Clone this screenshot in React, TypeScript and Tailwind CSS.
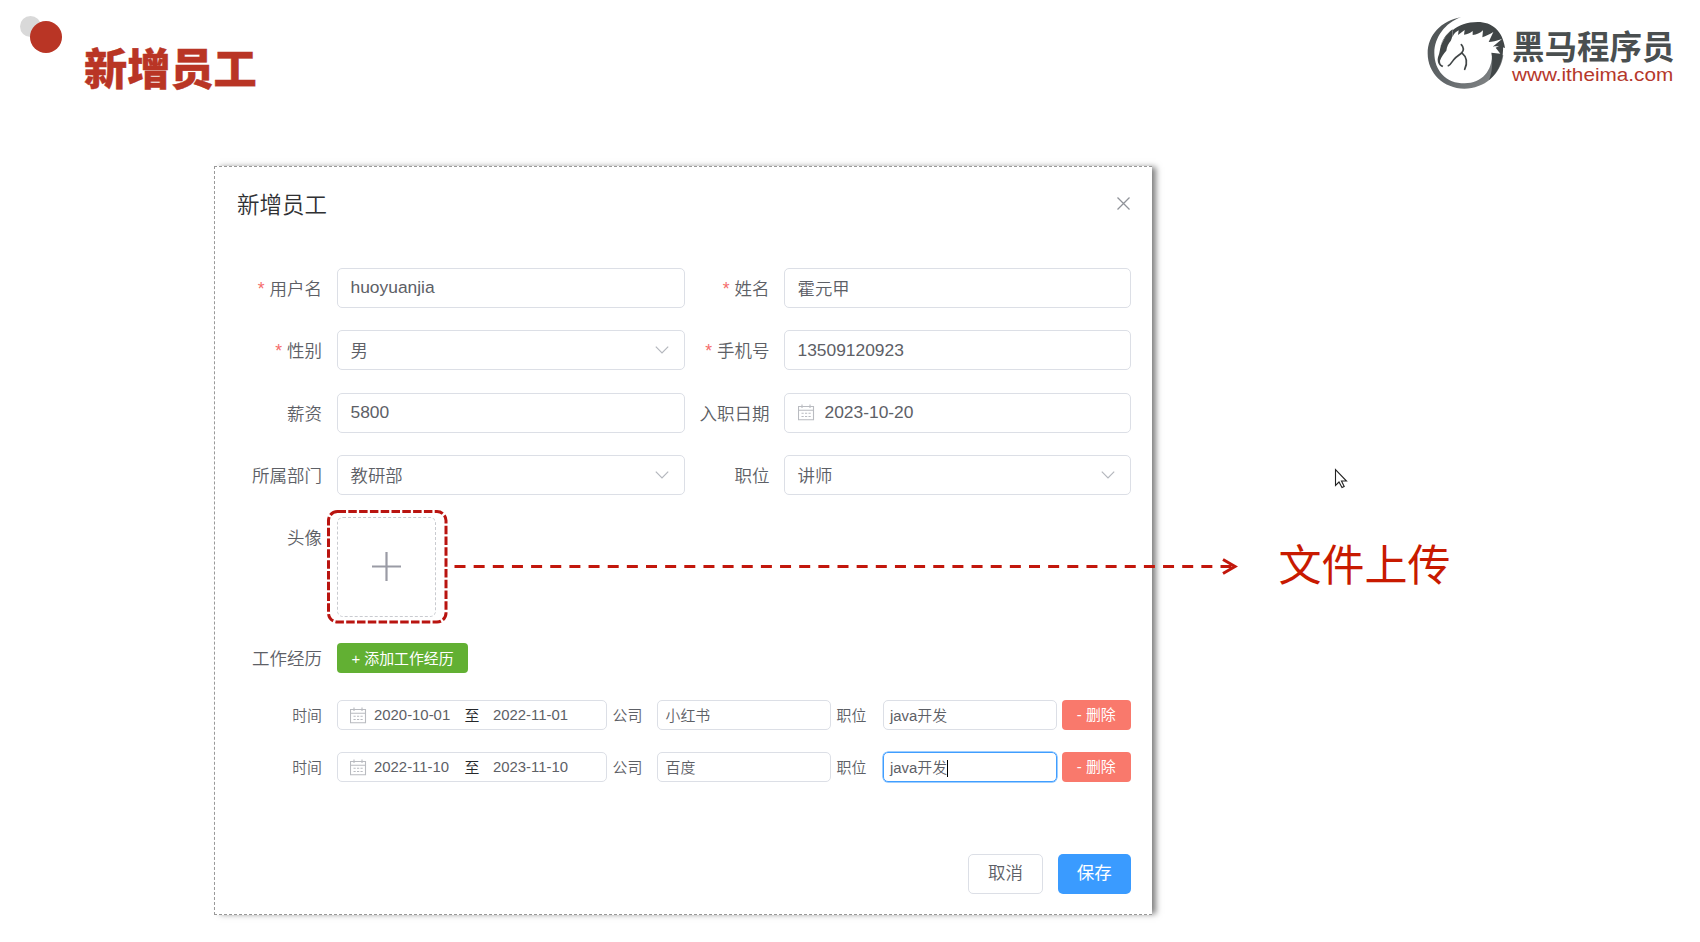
import type { ReactNode } from "react";

function HorseLogo() {
  return (
    <svg className="h-[82px] w-[90px]" viewBox="0 0 270 246">
      <defs>
        <linearGradient id="ring" x1="0" y1="0" x2="1" y2="1">
          <stop offset="0" stopColor="#4a4f50" />
          <stop offset="0.55" stopColor="#62676a" />
          <stop offset="1" stopColor="#8a8d8e" />
        </linearGradient>
      </defs>
      <path
        fill="url(#ring)"
        d="M117 16C58 26 17 70 17 124c0 60 48 106 110 106 60 0 109-42 117-100l-34-6c2 52-30 90-82 90-56 0-91-38-91-92 0-44 32-90 80-106z"
      />
      <path fill="#414647" d="M243 96c3 42-10 82-42 108 10-24 12-54 7-82l27 3-14-18z" />
      <path
        fill="#414647"
        d="M54 112C58 86 72 66 92 52l-1 24c5-11 11-17 19-21l-2 14 20-15-2 14c10-1 18-4 26-11l0 12c12-1 22-5 31-14l-2 21c11-4 21-9 33-16l-14 30c10 0 23-3 40-9l-28 23c13-2 22-1 37 4C242 56 210 30 167 30c-31 0-58 9-77 26C70 71 58 90 54 112z"
      />
      <path fill="#414647" d="M91 54C70 70 57 92 53 118c-1 8-5 15-6 24 0 10 3 19 14 24l3-5c-8-2-10-7-10-15 4-11 11-21 19-30 2-12 6-22 13-29 4-7 6-16 5-33z" />
      <path fill="none" stroke="#414647" strokeWidth="5" strokeLinecap="round" d="M118 98c8 9 8 17 1 25-10 8-18 12-24 20-5 7-9 15-16 18" />
      <path fill="none" stroke="#414647" strokeWidth="5" strokeLinecap="round" d="M119 122c14 12 19 29 9 50" />
    </svg>
  );
}

function CalendarIcon() {
  return (
    <svg className="h-[17px] w-[17px] shrink-0" viewBox="0 0 17 17" fill="none" stroke="#b9bbc0" strokeWidth="1.1">
      <path d="M.5 2.5h15v13.300H.5zM.5 6.2h15M4 .5v3.6M12 .5v3.6" />
      <path d="M3.500 9.200h2.200M7 9.200h2.200M10.500 9.200h2.200M3.500 12.500h2.200M7 12.500h2.200M10.500 12.500h2.200" />
    </svg>
  );
}

function ChevronDown() {
  return (
    <svg className="mr-[15px] ml-auto h-3 w-[14px]" viewBox="0 0 14 12" fill="none" stroke="#b4b7bd" strokeWidth="1.2">
      <path d="M.8 2.6 7 8.8l6.200-6.200" />
    </svg>
  );
}

function Label({ children, required, width }: { children: ReactNode; required?: boolean; width: string }) {
  return (
    <div className={"flex shrink-0 justify-end pt-0.5 text-[17.5px] font-[350] text-[#5d6066] " + width}>
      {required && <span className="mr-[5px] text-[#f56c6c]">*</span>}
      <span className="whitespace-nowrap">{children}</span>
    </div>
  );
}

type FieldProps = { label: string; value: string; required?: boolean; select?: boolean; date?: boolean; right?: boolean };

function Field({ label, value, required, select, date, right }: FieldProps) {
  const latin = /^[\x20-\x7e]+$/.test(value);
  return (
    <div className="flex items-center">
      <Label required={required} width={right ? "w-[85px]" : "w-[107px]"}>
        {label}
      </Label>
      <div
        className={
          "flex h-[40px] items-center rounded-[5px] border border-[#dcdfe6] pl-[12.5px] text-[17.4px] font-[350] text-[#5d6066] " +
          (right ? "ml-[14.500px] w-[347px]" : "ml-[15px] w-[347.500px]")
        }
      >
        {date && (
          <span className="mr-[10px] flex">
            <CalendarIcon />
          </span>
        )}
        <span className={latin ? "pb-px" : "pt-0.5"}>{value}</span>
        {select && <ChevronDown />}
      </div>
    </div>
  );
}

type Job = { from: string; to: string; company: string; title: string; focused?: boolean };

const jobs: Job[] = [
  { from: "2020-10-01", to: "2022-11-01", company: "小红书", title: "java开发" },
  { from: "2022-11-10", to: "2023-11-10", company: "百度", title: "java开发", focused: true },
];

function JobRow({ job }: { job: Job }) {
  return (
    <div className="flex h-[30px] items-center text-[14.900px] leading-none font-[350] whitespace-nowrap text-[#5d6066]">
      <span className="w-[107px] pt-[3px] text-right">时间</span>
      <div className="ml-[15px] flex h-[30px] w-[270px] items-center rounded-[5px] border border-[#dcdfe6] pl-[12px]">
        <CalendarIcon />
        <span className="ml-[7px] w-[76px] pt-px">{job.from}</span>
        <span className="ml-[14.500px] pt-[3px] text-[#26282b]">至</span>
        <span className="ml-[13.500px] pt-px">{job.to}</span>
      </div>
      <span className="ml-[5.500px] w-[44px] pt-[3px]">公司</span>
      <div className="flex h-[30px] w-[174px] items-center rounded-[5px] border border-[#dcdfe6] pt-[3px] pl-2">{job.company}</div>
      <span className="ml-[6px] w-[46px] pt-[3px]">职位</span>
      <div
        className={
          "flex h-[30px] w-[174px] items-center rounded-[5px] border pt-0.5 pl-[6.5px] " +
          (job.focused ? "border-[#409eff] shadow-[0_0_0_0.5px_#409eff]" : "border-[#dcdfe6]")
        }
      >
        {job.title}
        {job.focused && <span className="h-[17px] w-px bg-black" />}
      </div>
      <button className="ml-[5.500px] h-[30px] w-[68.5px] rounded-[4px] bg-[#f9796c] pt-px font-normal text-white">- 删除</button>
    </div>
  );
}

export default function App() {
  return (
    <div className="relative h-[942px] w-[1700px] overflow-hidden bg-white font-['Liberation_Sans','Noto_Sans_CJK_SC',sans-serif]">
      <header className="flex h-[166px] items-start justify-between">
        <div className="flex">
          <svg className="h-[60px] w-[84px]" viewBox="0 0 84 60">
            <circle cx="30.500" cy="26.500" r="10.500" fill="#d9d9d9" />
            <circle cx="46" cy="37" r="16" fill="#b93525" />
          </svg>
          <h1 className="mt-[36px] font-['Noto_Sans_CJK_SC'] text-[43.2px] leading-[60px] font-black text-[#b93525] [-webkit-text-stroke:0.4px_#b93525]">新增员工</h1>
        </div>
        <div className="flex pt-3 pr-[26px]">
          <HorseLogo />
          <div className="w-[162px] pt-[15px] whitespace-nowrap">
            <div className="font-['Noto_Sans_CJK_SC'] text-[32.500px] leading-[36px] font-bold text-[#4a4f50]">黑马程序员</div>
            <div className="mt-[2px] origin-left scale-x-[1.08] text-[19.200px] leading-[19px] text-[#b5382b]">www.itheima.com</div>
          </div>
        </div>
      </header>

      <section className="ml-[214px] h-[749px] w-[938px] border border-r-0 border-dashed border-[#999] bg-white shadow-[5px_0_6px_-1px_rgba(0,0,0,0.5)]">
        <div className="flex h-[101px] items-start justify-between pt-[21px] pr-[22px] pl-[22px]">
          <h2 className="text-[22.500px] leading-[36px] font-[350] text-[#303133]">新增员工</h2>
          <svg className="mt-[8.500px] h-[13px] w-[13px]" viewBox="0 0 13 13" stroke="#909399" strokeWidth="1.3">
            <path d="M.5.500l12 12M12.500.500l-12 12" />
          </svg>
        </div>

        <div className="grid grid-cols-[469.500px_447px] gap-y-[22.400px]">
          <Field label="用户名" value="huoyuanjia" required />
          <Field label="姓名" value="霍元甲" required right />
          <Field label="性别" value="男" required select />
          <Field label="手机号" value="13509120923" required right />
          <Field label="薪资" value="5800" />
          <Field label="入职日期" value="2023-10-20" date right />
          <Field label="所属部门" value="教研部" select />
          <Field label="职位" value="讲师" select right />
        </div>

        <div className="mt-[21.700px] flex h-[100px] items-start">
          <div className="pt-[6px]">
            <Label width="w-[107px]">头像</Label>
          </div>
          <div className="relative ml-[15px] flex h-[100px] w-[99px] items-center justify-center rounded-[6px] border border-dashed border-[#c9cbd0]">
            <svg className="-mt-px h-[29px] w-[29px]" viewBox="0 0 29 29" stroke="#9a9ba5" strokeWidth="2.2">
              <path d="M14.500 0v29M0 14.500h29" />
            </svg>
            <svg className="absolute -top-[8px] -left-[11px] h-[114px] w-[121px]" viewBox="0 0 121 114" fill="none" stroke="#b91410" strokeWidth="3">
              <rect x="1.500" y="1.500" width="117.500" height="110.500" rx="9" strokeDasharray="8.500 2.300" />
            </svg>
          </div>
        </div>

        <div className="mt-[26px] flex h-[30px] items-center">
          <Label width="w-[107px]">工作经历</Label>
          <button className="ml-[15px] h-[30px] w-[131px] rounded-[4px] bg-[#62b033] pt-[3px] text-[14.900px] leading-none whitespace-nowrap text-white">+ 添加工作经历</button>
        </div>

        <div className="mt-[27.300px] flex flex-col gap-[22px]">
          {jobs.map((job) => (
            <JobRow key={job.from} job={job} />
          ))}
        </div>

        <div className="mt-[72px] flex justify-end gap-[14.5px] pr-[21px] text-[17.500px] leading-none">
          <button className="h-10 w-[75px] rounded-[5px] border border-[#dcdfe6] font-[350] text-[#5d6066]">取消</button>
          <button className="h-10 w-[73.5px] rounded-[5px] bg-[#3a9bff] text-white">保存</button>
        </div>
      </section>

      <svg className="absolute top-[556px] left-[454px] h-[22px] w-[786px]" viewBox="0 0 786 22" fill="none" stroke="#c2170c" strokeWidth="3">
        <path d="M.5 10.500H781" strokeDasharray="11 8.150" />
        <path d="M769 3.500 781 10.500l-12 7" />
      </svg>
      <div className="absolute top-[536px] left-[1278.5px] text-[43px] leading-[60px] whitespace-nowrap text-[#c81a00]">文件上传</div>

      <svg className="absolute top-[468px] left-[1334px] h-[22px] w-[15px]" viewBox="0 0 15 22" fill="white" stroke="#222" strokeWidth="1.1">
        <path d="M1.500 1.500v16l3.500-3.500 3 5.500 2.200-1-2.700-5.500h5z" />
      </svg>
    </div>
  );
}
